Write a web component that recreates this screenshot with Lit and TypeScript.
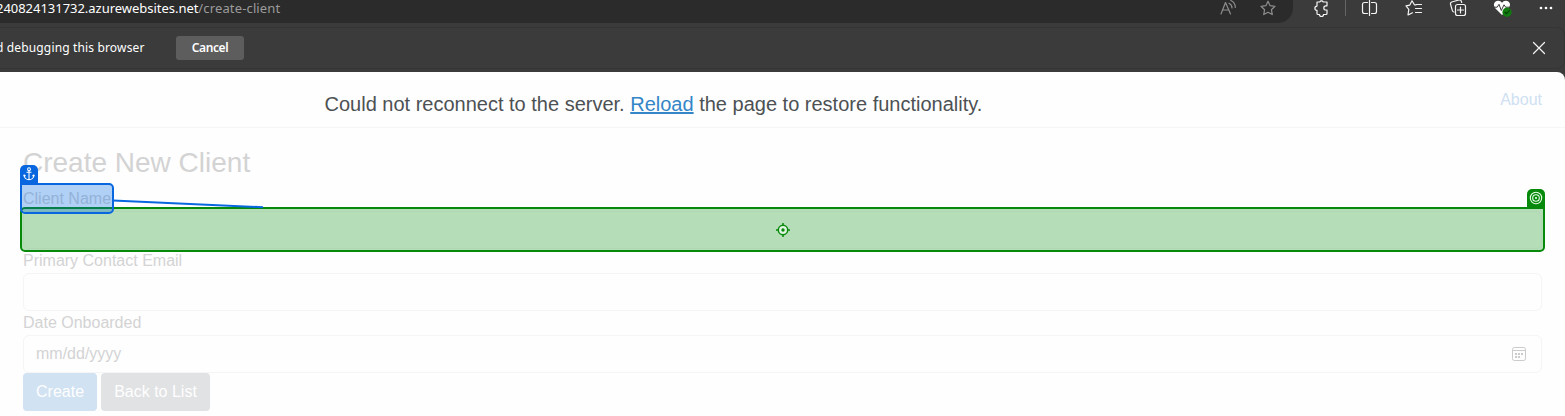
import { LitElement, html, css, svg } from "lit";
import { customElement } from "lit/decorators.js";

const star = "M8 1.2l2.1 4.5 4.9.6-3.6 3.4.9 4.9L8 12.2l-4.3 2.4.9-4.9L1 6.3l4.9-.6z";

@customElement("browser-chrome")
class BrowserChrome extends LitElement {
  static styles = css`
    :host { display: block; height: 72px; background: #3b3b3b; color: #fff; font-family: "Noto Sans", "Open Sans", sans-serif; }
    .toolbar { display: flex; height: 27px; }
    .address { box-sizing: border-box; display: flex; width: 1293px; height: 23px; background: #2b2b2b; border-radius: 0 0 15px 0; overflow: hidden; }
    .url { flex: 1; margin-left: -4px; font-size: 13px; line-height: 16px; white-space: nowrap; letter-spacing: -0.03px; }
    .path { color: #9b9b9b; letter-spacing: 0.14px; }
    .addressicons { width: 77px; flex: none; }
    .tools { flex: 1; height: 23px; }
    svg { display: block; fill: none; stroke: #f4f4f4; stroke-width: 1.2; stroke-linejoin: round; stroke-linecap: round; }
    .addressicons svg { stroke: #8d8d8d; }
    .infobar { box-sizing: border-box; display: flex; align-items: center; height: 42px; border: 1px solid #353535; border-left: 0; border-radius: 0 8px 8px 0; padding-right: 18px; }
    .message { font-size: 12px; width: 148px; margin-left: -4px; white-space: nowrap; letter-spacing: 0.15px; line-height: 16px; }
    .cancel { box-sizing: border-box; width: 68px; height: 24px; margin-left: 32px; padding: 0; border: 0; border-radius: 3px; background: #5d5d5d; color: #fff; font: 600 12px/24px "Noto Sans", sans-serif; letter-spacing: -0.35px; }
    .close { margin-left: auto; }
  `;
  render() {
    return html`
      <div class="toolbar">
        <div class="address">
          <div class="url"><span class="host">240824131732.azurewebsites.net</span><span class="path">/create-client</span></div>
          <div class="addressicons">
            <svg width="77" height="23" viewBox="1216 0 77 23">
              <path d="M1221 14L1225.5 2.5L1230.5 14M1222.7 10H1229M1229 3.2Q1232 4.5 1232 8M1230.8 .5Q1235.3 2.5 1235.3 7.5" />
              <g transform="translate(1260)"><path d=${star} /></g>
            </svg>
          </div>
        </div>
        <div class="tools">
          <svg width="272" height="23" viewBox="1293 0 272 23">
            <path d="M1317 2H1319.7A2 2 0 0 1 1323.3 2H1327V5.8H1325.9A2 2 0 0 0 1325.9 10H1327V13.5Q1327 14.5 1326 14.5H1323.5A2 2 0 0 1 1319.5 14.5H1318Q1317 14.5 1317 13.5V10.3A2.1 2.1 0 0 1 1317 6.1Z" />
            <path stroke="#666" stroke-width="1" d="M1345.5 0V15.5" />
            <path d="M1367.5 2.5H1364.5Q1362.5 2.5 1362.5 4.5V11.5Q1362.5 13.5 1364.5 13.5H1367.5M1371.5 2.5H1374.5Q1376.5 2.5 1376.5 4.5V11.5Q1376.5 13.5 1374.5 13.5H1371.5M1369.5 .5V15.5" />
            <path d="M1416 4.8H1414.4L1412 .8L1409.8 5.1L1406 5.8L1408.8 9.3L1408 15L1412.5 12.8M1416.5 4.5H1421.5M1415.5 8.5H1421.5M1415.5 12.5H1421.5" />
            <rect x="1455.5" y="4.5" width="10" height="11" rx="2" />
            <path d="M1460.5 7V13M1457.5 10H1463.5M1454 12Q1452.8 12 1452.3 10.3L1450.6 4.5Q1450 2.7 1451.7 2L1459 0Q1461 -.3 1461.5 1.7L1461.7 2.5" />
            <path fill="#fff" stroke="none" d="M1502 15L1495.5 8.4C1492 4.4 1495 .3 1498.4 .8Q1500.7 1 1502 2.8Q1503.3 1 1505.6 .8C1509 .3 1512 4.4 1508.5 8.4Z" />
            <path stroke="#3b3b3b" stroke-width="1" d="M1494 7.2H1497.2L1499 4.3L1501.3 10.5L1504 4.8L1505.7 7.2H1510" />
            <circle cx="1507" cy="12.2" r="4.6" fill="#107c10" stroke="none" />
            <path stroke="#073e07" d="M1504.9 12.3L1506.5 13.7L1509.5 10.7" />
            <g fill="#fff" stroke="none"><circle cx="1541" cy="8" r="1.35" /><circle cx="1546" cy="8" r="1.35" /><circle cx="1551" cy="8" r="1.35" /></g>
          </svg>
        </div>
      </div>
      <div class="infobar">
        <div class="message">d debugging this browser</div>
        <button class="cancel">Cancel</button>
        <svg class="close" width="14" height="14" viewBox="0 0 14 14"><path d="M1.5 1.5L12.5 12.5M12.5 1.5L1.5 12.5" /></svg>
      </div>
    `;
  }
}

@customElement("client-page")
class ClientPage extends LitElement {
  static styles = css`
    :host { display: block; height: 344px; background: #3b3b3b; font: 16px/24px "Liberation Sans", Arial, sans-serif; color: #d3d3d4; }
    .page { position: relative; height: 344px; background: #fefefe; border-radius: 0 8px 0 0; overflow: hidden; }
    .header { box-sizing: border-box; display: flex; height: 56px; border-bottom: 1px solid #f6f6f6; padding: 0 23px 0 0; }
    .notice { flex: 1; padding-left: 324.5px; padding-top: 17px; font-size: 20px; line-height: 30px; color: #4d5154; }
    .notice a { color: #3486c8; text-decoration: underline; }
    .about { padding-top: 16px; color: #cfe1f2; }
    .main { padding: 18.4px 23px 0; }
    h3 { font-size: 28px; line-height: 33.6px; font-weight: 400; margin: 0 0 7px; }
    .label { height: 24px; }
    .field { box-sizing: border-box; display: flex; align-items: center; justify-content: space-between; height: 38px; border: 1px solid #f5f5f6; border-radius: 6px; padding: 0 14px 0 12px; }
    .field svg { display: block; fill: none; stroke: #cbcbcb; }
    .actions { display: flex; gap: 4px; }
    .btn { box-sizing: border-box; height: 38px; border: 0; border-radius: 4px; padding: 0 13px; font: inherit; line-height: 38px; color: #fefefe; }
    .primary { width: 74px; background: #d1e2f2; }
    .secondary { width: 109px; background: #e1e2e4; }
    .target, .anchor, .tab, .link, .aim { position: absolute; box-sizing: border-box; }
    .target { left: 20px; top: 135px; width: 1525px; height: 45px; border: 2px solid #078a0b; border-radius: 5px 0 5px 5px; background: rgba(7, 142, 15, 0.295); }
    .anchor { left: 20px; top: 111px; width: 94px; height: 31px; border: 2px solid #0867df; border-radius: 0 5px 5px 5px; background: rgba(0, 103, 224, 0.3); }
    .tab { width: 18px; height: 19px; padding-bottom: 1px; border-radius: 5px 5px 0 0; display: grid; place-items: center; }
    .blue { left: 20px; top: 93px; background: #0867df; }
    .green { left: 1527px; top: 117px; background: #078a0b; }
    .link { left: 113px; top: 126px; }
    .aim { left: 776px; top: 151px; }
    .glyph { display: block; fill: none; }
  `;
  render() {
    const dots = [[4, 7], [7, 7], [10, 7], [4, 10], [7, 10]];
    return html`
      <div class="page">
        <div class="header">
          <div class="notice">Could not reconnect to the server. <a>Reload</a> the page to restore functionality.</div>
          <div class="about">About</div>
        </div>
        <div class="main">
          <h3>Create New Client</h3>
          <div class="label">Client Name</div>
          <div class="field"></div>
          <div class="label">Primary Contact Email</div>
          <div class="field"></div>
          <div class="label">Date Onboarded</div>
          <div class="field">
            <span>mm/dd/yyyy</span>
            <svg width="15" height="16" viewBox="0 0 15 16">
              <rect x=".5" y="1.5" width="13" height="13" rx="1.8" /><path d="M1 4.5H13" />
              ${dots.map(([x, y]) => svg`<rect x=${x - 1} y=${y} width="2" height="2" fill="#cbcbcb" stroke="none" />`)}
            </svg>
          </div>
          <div class="actions"><button class="btn primary">Create</button><button class="btn secondary">Back to List</button></div>
        </div>
        <div class="target"></div>
        <div class="anchor"></div>
        <svg class="link" width="152" height="11" viewBox="0 0 152 11"><path d="M0 2.5L150 9.2" stroke="#0867df" stroke-width="2" /></svg>
        <div class="tab blue">
          <svg class="glyph" width="12" height="14" viewBox="0 0 12 14" stroke="#fff" stroke-width="1.1"><circle cx="6" cy="2.2" r="1.4" /><path d="M6 3.7V12.5M3.5 5.3H8.5M1.2 8V9Q2 12.6 6 12.6Q10 12.6 10.8 9V8M.5 9.2L1.2 8L2.6 9M9.4 9L10.8 8L11.5 9.2" /></svg>
        </div>
        <div class="tab green">
          <svg class="glyph" width="14" height="14" viewBox="0 0 14 14" stroke="#e8ffe8" stroke-width="1.1"><circle cx="7" cy="7" r="5.7" /><circle cx="7" cy="7" r="3.3" /><circle cx="7" cy="7" r="1.1" fill="#e8ffe8" stroke="none" /></svg>
        </div>
        <svg class="aim glyph" width="14" height="14" viewBox="0 0 14 14" stroke="#078a0b" stroke-width="1.5"><circle cx="7" cy="7" r="4.7" fill="#e1f4e1" /><circle cx="7" cy="7" r="1.7" fill="#078a0b" stroke="none" /><path d="M7 0V2.5M7 11.5V14M0 7H2.5M11.5 7H14" /></svg>
      </div>
    `;
  }
}

@customElement("app-root")
class AppRoot extends LitElement {
  static styles = css`:host { display: block; width: 1565px; height: 416px; overflow: hidden; }`;
  render() {
    return html`<browser-chrome></browser-chrome><client-page></client-page>`;
  }
}
